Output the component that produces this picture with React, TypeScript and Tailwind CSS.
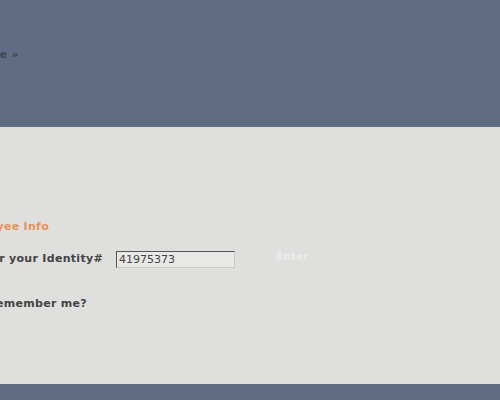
export default function App() {
  return (
    <div className="w-[500px] h-[400px] overflow-hidden flex flex-col bg-[#dfdfdd] font-['DejaVu_Sans',sans-serif] text-[11px] tracking-[0.3px]">
      <div className="h-[127px] shrink-0 bg-[#606c84] pt-[47px]">
        <div className="-ml-[81px] w-[100px] text-right font-bold text-[#3f4450] whitespace-nowrap">Continue »</div>
      </div>
      <div className="flex-1 pt-[92px]">
        <div className="-ml-[51px] w-[100px] text-right font-bold text-[#e4935a] whitespace-nowrap">Employee Info</div>
        <div className="flex items-center mt-[15px] h-[17px]">
          <div className="-ml-[47px] w-[150px] text-right font-bold text-[#444] whitespace-nowrap">Enter your Identity#</div>
          <input
            defaultValue="41975373"
            className="ml-[13px] w-[119px] h-[17px] px-[2px] bg-[#e8e8e6] text-[#444] text-[11px] tracking-normal border border-t-[#555] border-l-[#555] border-b-[#c8c8c6] border-r-[#c8c8c6] outline-none"
          />
          <div className="ml-[41px] -mt-[6px] text-[10px] tracking-[0.5px] font-bold text-[#ececeb] whitespace-nowrap">Enter</div>
        </div>
        <div className="-ml-[13px] w-[100px] text-right mt-[28px] font-bold text-[#444] whitespace-nowrap">Remember me?</div>
      </div>
      <div className="h-[16px] shrink-0 bg-[#606c84]" />
    </div>
  );
}
